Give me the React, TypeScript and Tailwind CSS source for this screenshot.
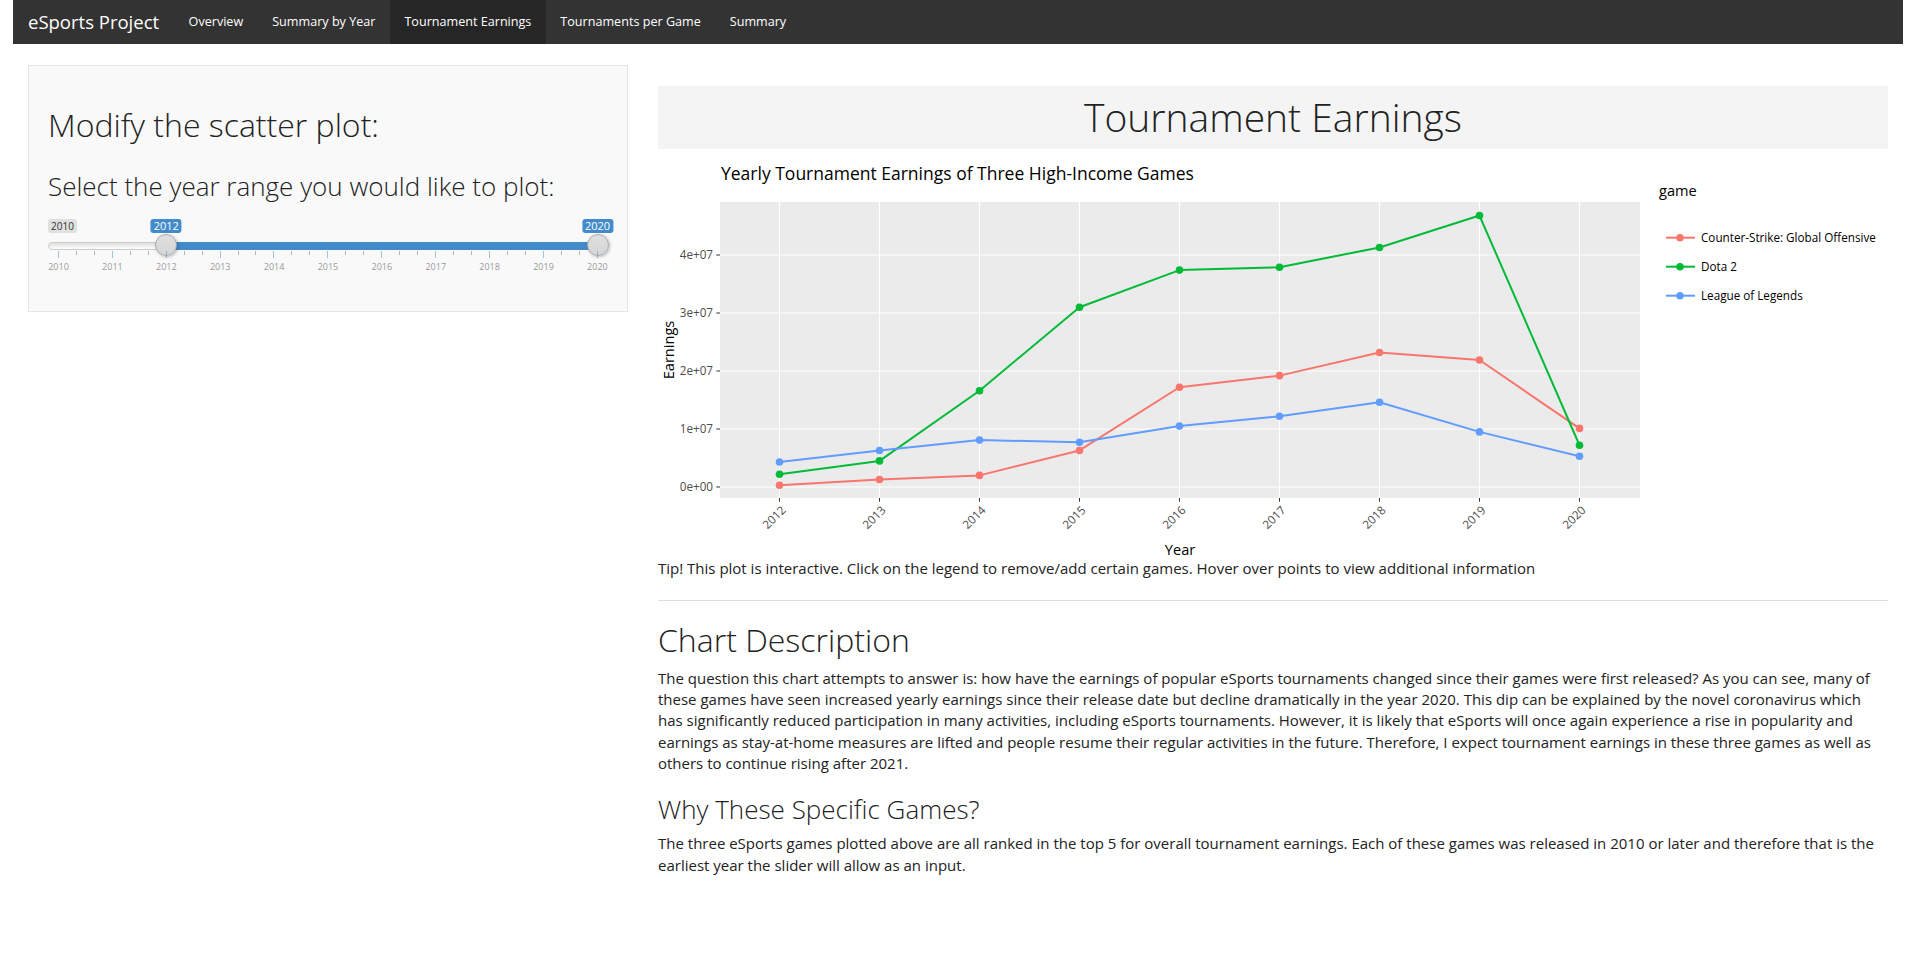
import React from 'react';

const navLinks = [
	{ label: 'Overview', active: false },
	{ label: 'Summary by Year', active: false },
	{ label: 'Tournament Earnings', active: true },
	{ label: 'Tournaments per Game', active: false },
	{ label: 'Summary', active: false },
];

const years = [2012, 2013, 2014, 2015, 2016, 2017, 2018, 2019, 2020];

// earnings in units of 1e7
const series = [
	{
		name: 'Counter-Strike: Global Offensive',
		color: '#F8766D',
		values: [0.03, 0.13, 0.2, 0.63, 1.72, 1.92, 2.32, 2.19, 1.01],
	},
	{
		name: 'Dota 2',
		color: '#00BA38',
		values: [0.22, 0.45, 1.66, 3.1, 3.74, 3.79, 4.13, 4.68, 0.72],
	},
	{
		name: 'League of Legends',
		color: '#619CFF',
		values: [0.43, 0.63, 0.81, 0.77, 1.05, 1.22, 1.46, 0.95, 0.53],
	},
];

const px = (i: number) => 121.5 + 100 * i;
const py = (v: number) => 338 - 58 * v;

function NavBar() {
	return (
		<nav className="flex h-[44px] items-stretch bg-[#333333]">
			<div className="flex items-center px-[15px] text-[18.5px] text-white">eSports Project</div>
			<ul className="flex items-stretch">
				{navLinks.map((l) => (
					<li
						key={l.label}
						className={`flex items-center px-[14.5px] text-[12.6px] text-white ${l.active ? 'bg-[#262626]' : ''}`}
					>
						{l.label}
					</li>
				))}
			</ul>
		</nav>
	);
}

function YearSlider() {
	const marks = Array.from({ length: 31 }, (_, k) => k);
	const labels = Array.from({ length: 11 }, (_, i) => 2010 + i);
	// x of a year, measured from the slider's left edge
	const tx = (year: number) => 10.5 + 53.9 * (year - 2010);
	const from = tx(2012);
	const to = tx(2020);

	return (
		<div className="pt-[8px]">
			{/* min / from / to labels */}
			<div className="relative h-[14px]">
				<span className="inline-block rounded-[3px] bg-[#e0e0e0] px-[3px] py-px align-top text-[10px] leading-[12px] text-[#333]">
					2010
				</span>
				{[
					{ x: from, label: '2012' },
					{ x: to, label: '2020' },
				].map((l) => (
					<span
						key={l.label}
						className="absolute top-0 -translate-x-1/2 rounded-[3px] bg-[#428bca] px-[3px] py-px text-[11px] leading-[12px] text-white"
						style={{ left: l.x }}
					>
						{l.label}
					</span>
				))}
			</div>

			{/* track with selected bar and handles */}
			<div className="relative mt-[9px] h-[8px] rounded-full border border-[#cccccc] bg-gradient-to-b from-[#dedede] to-white">
				<div className="absolute top-[-1px] h-[8px] bg-[#428bca]" style={{ left: from - 1, width: to - from }} />
				{[from, to].map((x) => (
					<div
						key={x}
						className="absolute top-[-9px] h-[22px] w-[22px] -translate-x-1/2 rounded-full border border-[#aaaaaa] bg-gradient-to-b from-[#dfdfdf] to-[#d6d6d6] shadow-[1px_1px_3px_rgba(0,0,0,0.25)]"
						style={{ left: x - 1 }}
					/>
				))}
			</div>

			{/* grid */}
			<div className="mt-px flex h-[7px] items-start justify-between px-[10px]">
				{marks.map((k) =>
					k % 3 === 0 ? (
						<span key={k} className="h-[7px] w-px bg-[#428bca] opacity-50" />
					) : (
						<span key={k} className="h-[4px] w-px bg-[#999] opacity-70" />
					),
				)}
			</div>
			<div className="mt-[3px] flex justify-between px-[10px] pb-[19px]">
				{labels.map((y) => (
					<div key={y} className="flex w-px justify-center">
						<span className="text-[9px] leading-[12px] text-[#999]">{y}</span>
					</div>
				))}
			</div>
		</div>
	);
}

function EarningsChart() {
	const font = "'Open Sans', verdana, arial, sans-serif";
	return (
		<svg width={1230} height={409} viewBox="0 0 1230 409" className="block" fontFamily={font}>
			<text x={63} y={31} fontSize={17.5} fill="#000">
				Yearly Tournament Earnings of Three High-Income Games
			</text>

			{/* panel */}
			<rect x={62} y={53} width={920} height={296} fill="#EBEBEB" />
			{[0, 1, 2, 3, 4].map((v) => (
				<line key={v} x1={62} x2={982} y1={py(v)} y2={py(v)} stroke="#fff" strokeWidth={1.1} />
			))}
			{years.map((_, i) => (
				<line key={i} x1={px(i)} x2={px(i)} y1={53} y2={349} stroke="#fff" strokeWidth={1.1} />
			))}

			{/* y axis */}
			{[0, 1, 2, 3, 4].map((v) => (
				<g key={v}>
					<line x1={58.3} x2={62} y1={py(v)} y2={py(v)} stroke="#333" strokeWidth={1} />
					<text x={55} y={py(v)} dy="0.35em" fontSize={11.7} fill="#4d4d4d" textAnchor="end">
						{`${v}e+0${v === 0 ? 0 : 7}`}
					</text>
				</g>
			))}
			<text
				transform="translate(11,201) rotate(-90)"
				fontSize={14.6}
				fill="#000"
				textAnchor="middle"
				dy="0.35em"
			>
				Earnings
			</text>

			{/* x axis */}
			{years.map((y, i) => (
				<g key={y}>
					<line x1={px(i)} x2={px(i)} y1={349} y2={352.7} stroke="#333" strokeWidth={1} />
					<text
						transform={`translate(${px(i) + 4},${359}) rotate(-45)`}
						fontSize={11.7}
						fill="#4d4d4d"
						textAnchor="end"
						dy="0.35em"
					>
						{y}
					</text>
				</g>
			))}
			<text x={522} y={401} dy="0.35em" fontSize={14.6} fill="#000" textAnchor="middle">
				Year
			</text>

			{/* data */}
			{series.map((s) => (
				<g key={s.name}>
					<polyline
						points={s.values.map((v, i) => `${px(i)},${py(v)}`).join(' ')}
						fill="none"
						stroke={s.color}
						strokeWidth={2}
						strokeLinejoin="round"
					/>
					{s.values.map((v, i) => (
						<circle key={i} cx={px(i)} cy={py(v)} r={3.8} fill={s.color} />
					))}
				</g>
			))}

			{/* legend */}
			<text x={1001} y={42} dy="0.35em" fontSize={14.6} fill="#000">
				game
			</text>
			{series.map((s, k) => {
				const y = 88.7 + 29 * k;
				return (
					<g key={s.name}>
						<line x1={1008} x2={1037} y1={y} y2={y} stroke={s.color} strokeWidth={2} />
						<circle cx={1022} cy={y} r={3.8} fill={s.color} />
						<text x={1043} y={y} dy="0.35em" fontSize={11.7} fill="#000">
							{s.name}
						</text>
					</g>
				);
			})}
		</svg>
	);
}

export default function App() {
	return (
		<div className="min-h-[966px] bg-white px-[13px] font-['Open_Sans',sans-serif] text-[15px] leading-[1.42857] text-[#222]">
			<NavBar />
			<div className="mt-[21px] flex">
				{/* sidebar */}
				<aside className="w-[630px] shrink-0 px-[15px]">
					<div className="border border-[#e5e5e5] bg-[#f9f9f9] p-[19px]">
						<h2 className="mt-[22px] text-[32px] font-light leading-[1.1]">Modify the scatter plot:</h2>
						<h3 className="mb-[10px] mt-[30px] text-[26px] font-light leading-[1.1]">
							Select the year range you would like to plot:
						</h3>
						<YearSlider />
					</div>
				</aside>

				{/* main */}
				<main className="min-w-0 flex-1 px-[15px]">
					<div className="mt-[21px] bg-[#f4f4f4] pb-[11px] pt-[9px] text-center">
						<h1 className="text-[39px] font-light leading-[43px]">Tournament Earnings</h1>
					</div>
					<EarningsChart />
					<div>
						Tip! This plot is interactive. Click on the legend to remove/add certain games. Hover over points to view
						additional information
					</div>
					<hr className="mt-[21px] border-t border-[#dddddd]" />
					<h2 className="mb-[10px] mt-[21px] text-[32px] font-light leading-[1.1]">Chart Description</h2>
					<p>
						The question this chart attempts to answer is: how have the earnings of popular eSports tournaments changed
						since their games were first released? As you can see, many of these games have seen increased yearly
						earnings since their release date but decline dramatically in the year 2020. This dip can be explained by
						the novel coronavirus which has significantly reduced participation in many activities, including eSports
						tournaments. However, it is likely that eSports will once again experience a rise in popularity and
						earnings as stay-at-home measures are lifted and people resume their regular activities in the future.
						Therefore, I expect tournament earnings in these three games as well as others to continue rising after
						2021.
					</p>
					<h3 className="mb-[10px] mt-[20px] text-[26px] font-light leading-[1.1]">Why These Specific Games?</h3>
					<p>
						The three eSports games plotted above are all ranked in the top 5 for overall tournament earnings. Each of
						these games was released in 2010 or later and therefore that is the earliest year the slider will allow as
						an input.
					</p>
				</main>
			</div>
		</div>
	);
}
